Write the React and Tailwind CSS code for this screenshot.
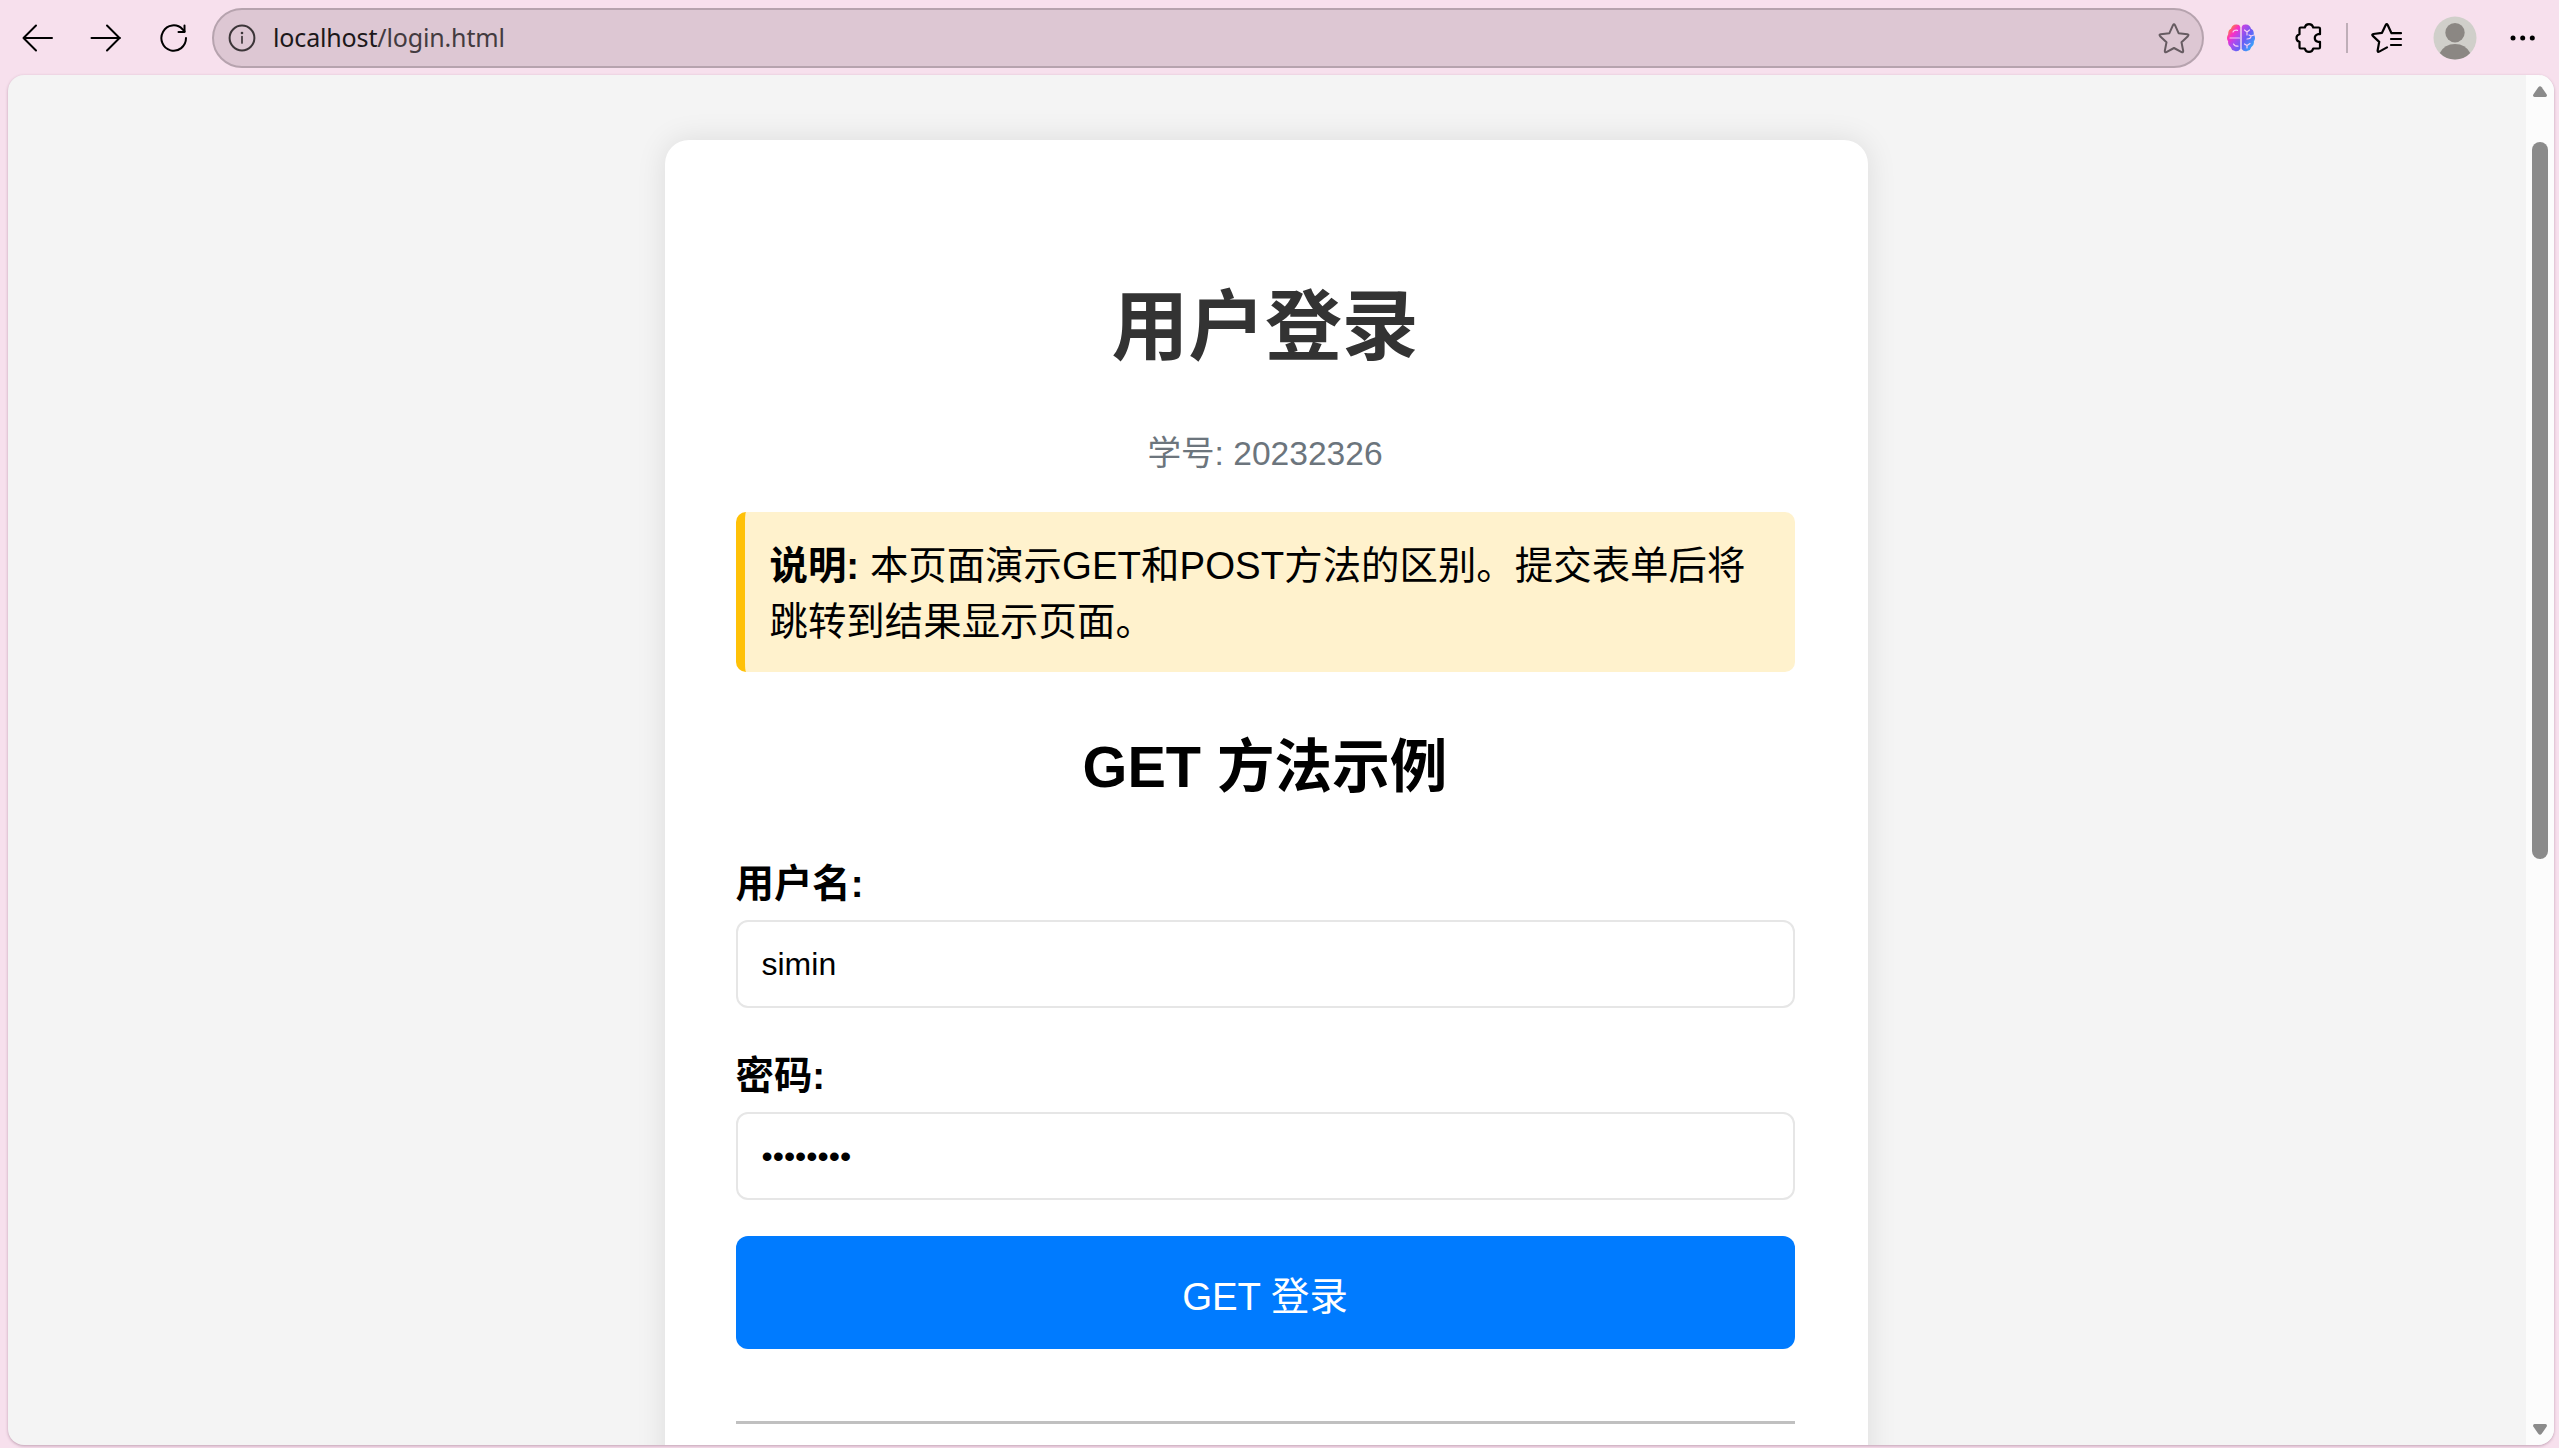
const iconProps = {
  fill: 'none',
  stroke: 'currentColor',
  strokeWidth: 2,
  strokeLinecap: 'round',
  strokeLinejoin: 'round',
};

const BackIcon = () => (
  <svg width="32" height="28" viewBox="0 0 32 28" {...iconProps}>
    <path d="M30 14H1.500M14 1.500 1.500 14 14 26.500" />
  </svg>
);

const ForwardIcon = () => (
  <svg width="32" height="28" viewBox="0 0 32 28" {...iconProps}>
    <path d="M1.500 14h28.500M17 1.500 29.500 14 17 26.500" />
  </svg>
);

const ReloadIcon = () => (
  <svg width="28" height="28" viewBox="0 0 28 28" {...iconProps}>
    <path d="M26 14A12.300 12.700 0 1 1 22.500 5.200L24.500 7.500" />
    <path d="M24.500 1.500v6.500h-6" />
  </svg>
);

const InfoIcon = () => (
  <svg width="28" height="28" viewBox="0 0 28 28" {...iconProps}>
    <circle cx="14" cy="14" r="12.400" />
    <path d="M14 12.500v6.500" strokeWidth="1.700" />
    <circle cx="14" cy="9" r="1.300" fill="currentColor" stroke="none" />
  </svg>
);

const StarIcon = () => (
  <svg width="32" height="32" viewBox="0 0 32 32" {...iconProps}>
    <path d="M15 3.200q1-1.700 2 0l3.600 8 8.700 1q2 .4.600 2l-6.400 6 1.700 8.700q.1 1.900-1.600 1.200L16 26l-7.600 4.100q-1.700.7-1.600-1.200L8.500 20.200l-6.400-6q-1.400-1.600.6-2l8.700-1z" />
  </svg>
);

const BrainIcon = () => (
  <svg width="30" height="28" viewBox="0 0 30 28">
    <defs>
      <linearGradient id="brainLeft" x1="0.1" y1="0" x2="0.7" y2="1">
        <stop offset="0" stopColor="#ffa21c" />
        <stop offset="0.2" stopColor="#fb6a60" />
        <stop offset="0.4" stopColor="#fb2fc4" />
        <stop offset="0.65" stopColor="#b048ee" />
        <stop offset="1" stopColor="#6a62f5" />
      </linearGradient>
      <linearGradient id="brainRight" x1="0" y1="0" x2="0.7" y2="1">
        <stop offset="0" stopColor="#d63fe0" />
        <stop offset="0.5" stopColor="#6a5cf5" />
        <stop offset="1" stopColor="#2fb0fb" />
      </linearGradient>
    </defs>
    <path fill="url(#brainLeft)" d="M14.300 3v22q-2.500 3.500-6 1.700-3-.7-3.500-3.500Q1.500 21 2.200 17.500-.3 14 2.200 10.200 2 6 5 4.800 6 .8 10 .6q3.500-.4 4.300 2.400z" />
    <path fill="url(#brainRight)" d="M15.700 3v22q2.500 3.500 6 1.700 3-.7 3.500-3.500 3.300-2.200 2.600-5.700 2.500-3.500 0-7.300Q28 6 25 4.800 24 .8 20 .6q-3.500-.4-4.300 2.400z" />
    <path
      d="M4 14h9.500M7 8q1-2.200 4.500-1.700M7.500 20q1 2.200 4.500 2.200M18.500 6l2.500 2 2.500-2M21 8v3M21 15q4 0 4-3l3-1M25 12l-2-1M18.500 20l2.500 1.500 3-2M21 21.500v2.500"
      fill="none"
      stroke="#f6cdf6"
      strokeWidth="1.200"
      strokeLinecap="round"
    />
  </svg>
);

const PuzzleIcon = () => (
  <svg width="28" height="32" viewBox="0 0 28 32" {...iconProps} strokeWidth="2.200">
    <path d="M6.700 5.500h4.100a4.300 4.300 0 0 1 8.400 0h5.600q1.200 0 1.200 1.200v5.500h-2.200a3.900 3.900 0 0 0 0 7.600H26v5.500q0 1.200-1.200 1.200h-5.600a4.300 4.300 0 0 1-8.400 0H6.700q-1.200 0-1.200-1.200v-5.500a3.900 3.900 0 0 1 0-7.600V6.700q0-1.200 1.200-1.200z" />
  </svg>
);

const FavoritesIcon = () => (
  <svg width="32" height="30" viewBox="0 0 32 30" {...iconProps} strokeWidth="2.200">
    <path d="M30 10.200H20.500L16.700 2q-1-1.600-2 0L11 9.800l-8.600 1.200q-1.800.4-.6 1.900l6.400 6L6.600 27.600q0 1.700 1.600 1l7.800-4.200" />
    <path d="M20 16h10M20 22h10" />
  </svg>
);

const ProfileIcon = () => (
  <svg width="44" height="44" viewBox="0 0 44 44">
    <circle cx="22" cy="22" r="21.500" fill="#d0cfca" />
    <circle cx="22" cy="16.700" r="9.700" fill="#8b8783" />
    <path d="M6.800 37q4.700-9 15.200-9t15.200 9q-6 6.500-15.200 6.500T6.800 37z" fill="#8b8783" />
  </svg>
);

const MoreIcon = () => (
  <svg width="26" height="6" viewBox="0 0 26 6" fill="currentColor">
    <circle cx="3" cy="3" r="2.500" />
    <circle cx="12.700" cy="3" r="2.500" />
    <circle cx="22.300" cy="3" r="2.500" />
  </svg>
);

const Toolbar = () => (
  <header className="flex h-[75px] shrink-0 items-center pt-px pl-[22px] text-black">
    <BackIcon />
    <div className="ml-9"><ForwardIcon /></div>
    <div className="ml-[38px]"><ReloadIcon /></div>

    <div className="mb-px ml-6 flex h-[60px] w-[1992px] shrink-0 items-center rounded-full border-2 border-[#b6a3ae] bg-[#ddc7d3] pr-3 pl-[14px] text-[#3b3538]">
      <InfoIcon />
      <span className="ml-[17px] flex-1 pt-px font-['Noto_Sans',sans-serif] text-[25px] tracking-[-0.150px] text-[#433b40]">
        <span className="text-[#1c181a]">localhost</span>/login.html
      </span>
      <span className="text-[#665b61]"><StarIcon /></span>
    </div>

    <div className="ml-[22px]"><BrainIcon /></div>
    <div className="ml-[38px]"><PuzzleIcon /></div>
    <div className="ml-6 h-[30px] w-[2px] bg-[#bfaeb8]" />
    <div className="ml-[23px]"><FavoritesIcon /></div>
    <div className="ml-[30px]"><ProfileIcon /></div>
    <div className="ml-[33px]"><MoreIcon /></div>
  </header>
);

const Field = ({ label, type, value }) => (
  <div className="flex flex-col gap-2">
    <label className="h-[56px] text-[38.400px] leading-[56px] font-bold">{label}</label>
    <input
      type={type}
      defaultValue={value}
      className="h-[88px] rounded-[12px] border-2 border-[#e6e6e6] bg-white px-6 text-[32px] outline-none"
    />
  </div>
);

const LoginCard = () => (
  <main className="mt-[65px] flex h-[1400px] w-[1203px] shrink-0 flex-col rounded-[24px] bg-white pt-[131px] pr-[73px] pl-[71px] text-black shadow-[0_0_30px_rgba(0,0,0,0.1)]">
    <h1 className="text-center text-[76.800px] leading-[112px] font-bold text-[#333333]">用户登录</h1>
    <p className="mt-[46px] text-center text-[33.600px] leading-[50px] text-[#6c757d]">学号: 20232326</p>
    <div className="mt-[33px] h-[160px] rounded-[10px] border-l-[9px] border-[#ffc107] bg-[#fff2cd] pt-[26px] pl-[25px] text-[38.400px] leading-[56px] tracking-[0.040px]">
      <strong>说明:</strong> 本页面演示GET和POST方法的区别。提交表单后将
      <br />
      跳转到结果显示页面。
    </div>
    <h2 className="mt-[53px] text-center text-[57.600px] leading-[84px] font-bold">GET 方法示例</h2>
    <form className="mt-[47px] flex flex-col gap-9">
      <div className="flex flex-col gap-10">
        <Field label="用户名:" type="text" value="simin" />
        <Field label="密码:" type="password" value="20232326" />
      </div>
      <button type="button" className="h-[113px] rounded-[12px] bg-[#007bff] pt-2 text-[38.400px] text-white">
        GET 登录
      </button>
    </form>
    <hr className="mt-[72px] border-t-[3px] border-[#c0c0c0]" />
  </main>
);

const Scrollbar = () => (
  <div className="flex w-7 flex-col items-center bg-[#fcfcfc] pt-[11px]">
    <svg width="14" height="11" viewBox="0 0 14 11" fill="#8b8b8b">
      <path d="M5.300 1.200q1.700-2 3.400 0l5 7.400q.8 2-1.200 2.400h-11q-2-.4-1.200-2.400z" />
    </svg>
    <div className="mt-[45px] h-[717px] w-4 rounded-full bg-[#8b8b8b]" />
    <svg className="mt-auto mb-[10px]" width="14" height="11" viewBox="0 0 14 11" fill="#8b8b8b">
      <path d="M5.300 9.800q1.700 2 3.400 0l5-7.400q.8-2-1.200-2.400h-11q-2 .4-1.200 2.400z" />
    </svg>
  </div>
);

export default function App() {
  return (
    <div className="flex h-[1448px] w-[2559px] flex-col overflow-hidden bg-[#f7e0ed] font-['Liberation_Sans','Noto_Sans_CJK_SC',sans-serif]">
      <Toolbar />
      <div className="ml-2 flex h-[1370px] w-[2546px] shrink-0 overflow-hidden rounded-[16px] bg-[#f4f4f4] shadow-[0_1px_3px_rgba(90,40,70,0.35)]">
        <div className="flex flex-1 justify-center overflow-hidden pr-[2px]">
          <LoginCard />
        </div>
        <Scrollbar />
      </div>
    </div>
  );
}
